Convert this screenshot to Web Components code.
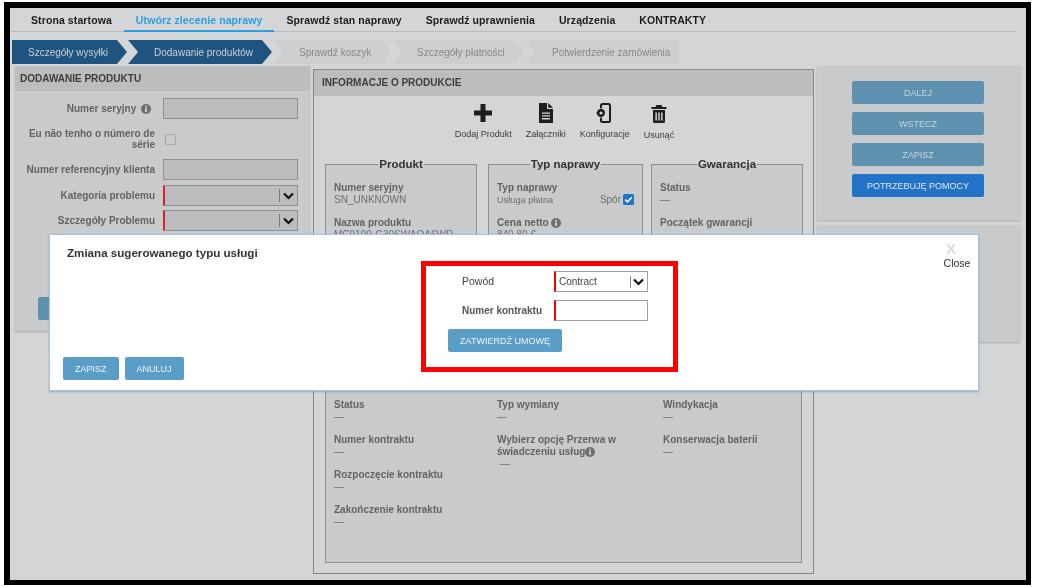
<!DOCTYPE html>
<html lang="pl"><head><meta charset="utf-8"><title>Zlecenie naprawy</title>
<style>
html,body{margin:0;background:#fff;font-family:"Liberation Sans",Arial,sans-serif;}
</style></head><body>
<repair-app></repair-app>
<template id="t-app"><style>
:host{display:block;box-sizing:border-box;width:1027px;height:583px;margin:2px 6px 2px 4px;border:solid #000;border-width:6px 5px 5px 6px;background:#d4d5d7;position:relative;overflow:hidden;font-size:11px;color:#555;filter:blur(.3px)}
.cols{display:grid;grid-template-columns:295px 501px 203px;gap:3px;padding-left:5px;margin-top:2px;align-items:start}
.left{display:block;height:265px}
.mid{margin-top:3px;height:505px}
.rightcol{display:flex;flex-direction:column;gap:5px}
.bl{display:flex;flex-direction:column;gap:8px;width:132px;margin:15px 0 0 35px;padding-bottom:23px}
.r2{height:117px}
.tools{display:flex;justify-content:center;gap:14px;padding:7px 0 0 2px;height:61px;box-sizing:content-box;align-items:flex-start}
.boxes{display:grid;grid-template-columns:152px 155px 152px;column-gap:11px;margin:0 11px;height:120px;overflow:visible}
.boxes>:nth-child(3){margin:0 3px 0 -3px;}
.big{margin:67px 11px 0;height:212px;display:grid;grid-template-columns:163px 166px 1fr;padding:47px 8px 0;box-sizing:border-box;border:1px solid #8d8f91;background:#c9cacc;align-content:start}
.big>div{display:flex;flex-direction:column}
.spor{position:absolute;right:9px;top:29px;display:flex;align-items:center;gap:2px;color:#6c6e70;font-size:10px}
.spor svg{display:block;margin-right:-1px}
.lbtn{display:block;margin:66px 0 0 23px;width:60px;height:23px;background:#5e90b0;border-radius:2px}
</style>
<nav-bar>
  <nav-link>Strona startowa</nav-link><nav-link active>Utwórz zlecenie naprawy</nav-link><nav-link>Sprawdź stan naprawy</nav-link><nav-link>Sprawdź uprawnienia</nav-link><nav-link>Urządzenia</nav-link><nav-link>KONTRAKTY</nav-link>
</nav-bar>
<step-bar>
  <step-item done first style="width:115px;padding-left:16px">Szczegóły wysyłki</step-item>
  <step-item done style="width:144px;padding-left:26px">Dodawanie produktów</step-item>
  <step-item style="width:118px;padding-left:26px">Sprawdź koszyk</step-item>
  <step-item style="width:132px;padding-left:25px">Szczegóły płatności</step-item>
  <step-item last style="width:154px;padding-left:27px">Potwierdzenie zamówienia</step-item>
</step-bar>
<div class="cols">
  <info-panel class="left" shadow title-text="DODAWANIE PRODUKTU">
    <form-row label="Numer seryjny" info kind="input" h="21" mt="7"></form-row>
    <form-row label="Eu não tenho o número de série" kind="check" h="22" mt="9"></form-row>
    <form-row label="Numer referencyjny klienta" kind="input" h="21" mt="9"></form-row>
    <form-row label="Kategoria problemu" kind="select" h="21" mt="5"></form-row>
    <form-row label="Szczegóły Problemu" kind="select" h="21" mt="4"></form-row>
    <div class="lbtn"></div>
  </info-panel>
  <info-panel class="mid" framed title-text="INFORMACJE O PRODUKCIE">
    <div class="tools">
      <tool-item label="Dodaj Produkt"><svg width="20" height="20" viewBox="0 0 20 20"><path fill="#1d1e20" d="M7.5 1h5v6.500H19v5h-6.500V19h-5v-6.500H1v-5h6.500z"/></svg></tool-item>
      <tool-item label="Załączniki"><svg width="20" height="20" viewBox="0 0 20 20"><path fill="#1d1e20" d="M3 0h8v6h6v14H3zM12.200 0l4.800 4.800h-4.800zM6 9.500v1.300h8V9.500zM6 12.300v1.300h8v-1.300zM6 15.100v1.300h8v-1.300z" fill-rule="evenodd"/></svg></tool-item>
      <tool-item label="Konfiguracje"><svg width="20" height="20" viewBox="0 0 20 20"><path fill="none" stroke="#1d1e20" stroke-width="2" d="M6 5V2.500Q6 1 7.500 1h6Q15 1 15 2.500v15q0 1.500-1.500 1.500h-6Q6 19 6 17.500V15"/><circle cx="6" cy="10" r="2.800" fill="none" stroke="#1d1e20" stroke-width="2.400"/><path stroke="#1d1e20" stroke-width="1.600" d="M6 5.500v1.500M6 13v1.500M1.500 10h1.500"/></svg></tool-item>
      <tool-item label="Usunąć" low><svg width="20" height="20" viewBox="0 0 20 20"><path fill="#1d1e20" fill-rule="evenodd" d="M7.500 2h5l1 2h4v2h-15V4h4zM4 7h12v11.500q0 1.500-1.500 1.500h-9Q4 20 4 18.500zM6.400 9.500v8h1.500v-8zM9.250 9.500v8h1.500v-8zM12.100 9.500v8h1.500v-8z"/></svg></tool-item>
    </div>
    <div class="boxes">
      <legend-box legend="Produkt">
        <data-field label="Numer seryjny" value="SN_UNKNOWN"></data-field>
        <data-field label="Nazwa produktu" value="MC9190-G30SWAQA6WR"></data-field>
      </legend-box>
      <legend-box legend="Typ naprawy">
        <data-field label="Typ naprawy" value="Usługa płatna" small></data-field>
        <data-field label="Cena netto" info value="840,80 €"></data-field>
        <div class="spor">Spór <svg width="11" height="11" viewBox="0 0 11 11"><rect width="11" height="11" rx="1.500" fill="#1f74d0"/><path d="M2.200 5.600l2.300 2.300 4.300-4.600" fill="none" stroke="#fff" stroke-width="1.600"/></svg></div>
      </legend-box>
      <legend-box legend="Gwarancja">
        <data-field label="Status" value="—"></data-field>
        <data-field label="Początek gwarancji" value=""></data-field>
      </legend-box>
    </div>
    <div class="big">
      <div><data-field label="Status" value="—"></data-field><data-field label="Numer kontraktu" value="—"></data-field><data-field label="Rozpoczęcie kontraktu" value="—"></data-field><data-field label="Zakończenie kontraktu" value="—"></data-field></div>
      <div><data-field label="Typ wymiany" value="—"></data-field><data-field label="Wybierz opcję Przerwa w świadczeniu usług" tail-info value="—" indent></data-field></div>
      <div><data-field label="Windykacja" value="—"></data-field><data-field label="Konserwacja baterii" value="—"></data-field></div>
    </div>
  </info-panel>
  <div class="rightcol">
    <info-panel shadow>
      <div class="bl"><action-button>DALEJ</action-button><action-button>WSTECZ</action-button><action-button>ZAPISZ</action-button><action-button variant="help">POTRZEBUJĘ POMOCY</action-button></div>
    </info-panel>
    <info-panel class="r2" shadow></info-panel>
  </div>
</div>
<service-modal></service-modal>
</template>

<script>
const css = s => `<style>${s}</style>`;
const infoIcon = (sz=11) => `<svg width="${sz}" height="${sz}" viewBox="0 0 12 12" style="vertical-align:-2px"><circle cx="6" cy="6" r="6" fill="#6c6e70"/><rect x="5" y="5" width="2" height="4.500" fill="#ddd"/><rect x="5" y="2.300" width="2" height="1.800" fill="#ddd"/></svg>`;
const chevron = `<svg width="11" height="8" viewBox="0 0 11 8"><path d="M1 1.500l4.500 4.500 4.500-4.500" fill="none" stroke="#111" stroke-width="2.200"/></svg>`;
class Base extends HTMLElement{
  constructor(){super();this.attachShadow({mode:'open'});}
  connectedCallback(){this.shadowRoot.innerHTML=this.render();}
  attr(n,d=''){return this.hasAttribute(n)?this.getAttribute(n):d;}
}
class RepairApp extends HTMLElement{constructor(){super();this.attachShadow({mode:'open'}).appendChild(document.getElementById('t-app').content.cloneNode(true));}}
class NavBar extends Base{render(){return css(`:host{display:flex;height:23px;margin:0 9px 0 0;padding-left:9px;border-bottom:1px solid #b9babc}`)+`<slot></slot>`;}}
class NavLink extends Base{render(){const a=this.hasAttribute('active');return css(`:host{display:block;box-sizing:border-box;padding:0 12px;height:24px;font:bold 10.500px/24px "Liberation Sans",Arial,sans-serif;letter-spacing:.1px;color:${a?'#2a9ee0':'#1c1c1e'};${a?'border-bottom:2px solid #2a9ee0;':''}}`)+`<slot></slot>`;}}
class StepBar extends Base{render(){return css(`:host{display:flex;margin:8px 0 0 2px;height:24px}`)+`<slot></slot>`;}}
class StepItem extends Base{render(){const d=this.hasAttribute('done'),f=this.hasAttribute('first'),l=this.hasAttribute('last');
 const clip=f?'polygon(0 0,calc(100% - 10px) 0,100% 50%,calc(100% - 10px) 100%,0 100%)':l?'polygon(0 0,100% 0,100% 100%,0 100%,10px 50%)':'polygon(0 0,calc(100% - 10px) 0,100% 50%,calc(100% - 10px) 100%,0 100%,10px 50%)';
 return css(`:host{display:block;box-sizing:border-box;flex:none;height:24px;margin-right:1px;font:10px/25px "Liberation Sans",Arial,sans-serif;white-space:nowrap;background:${d?'#1f5480':'#cdced0'};color:${d?'#c9d0d6':'#86888a'};clip-path:${clip}}`)+`<slot></slot>`;}}
class InfoPanel extends Base{render(){const t=this.attr('title-text'),fr=this.hasAttribute('framed');
 return css(`:host{display:block;box-sizing:border-box;position:relative;background:${fr?'#d4d5d7':'#c9cacc'};${fr?'border:1px solid #85878a;':'box-shadow:0 1px 2px #a9aaac;'}}
 h2{margin:0;background:#bcbdbf;font:bold 10px/${fr?26:25}px "Liberation Sans",Arial,sans-serif;height:${fr?26:25}px;padding-left:${fr?8:5}px;color:#3c3d3f}`)+(t?`<h2>${t}</h2>`:'')+`<slot></slot>`;}}
class FormRow extends Base{render(){const h=this.attr('h','21'),k=this.attr('kind');
 const inner=k==='check'?`<span class="cb"></span>`:k==='select'?`<span class="f sel"><i></i>${chevron}</span>`:`<span class="f"></span>`;
 return css(`:host{display:grid;grid-template-columns:140px 135px;column-gap:8px;align-items:center;min-height:${h}px;margin-top:${this.attr('mt','5')}px;font:bold 10px/11px "Liberation Sans",Arial,sans-serif;color:#606264}
 .l{text-align:right;padding-left:2px}
 .f{box-sizing:border-box;display:flex;align-items:center;justify-content:flex-end;height:${h}px;background:#bcbdbf;border:1px solid #8e9092}
 .sel{border-left:2px solid #d8222a;padding-right:3px;gap:2px}
 .sel i{width:1px;height:13px;background:#77797b;margin-right:1px}
 .cb{width:9px;height:9px;border:1px solid #a6a7a9;border-radius:2px;background:#c9cacc;margin-left:2px}`)+
 `<div class="l">${this.attr('label')}${this.hasAttribute('info')?' <span style="display:inline-block;width:12px;padding-right:4px;text-align:right">'+infoIcon(10)+'</span>':''}</div>${inner}`;}}
class ToolItem extends Base{render(){return css(`:host{display:flex;flex-direction:column;align-items:center;font:9px/12px "Liberation Sans",Arial,sans-serif;color:#3a3b40;white-space:nowrap}
 .t{margin-top:${this.hasAttribute('low')?6:5}px}`)+`<slot></slot><div class="t">${this.attr('label')}</div>`;}}
class LegendBox extends Base{render(){return css(`:host{display:block;position:relative;box-sizing:border-box;border:1px solid #8d8f91;background:#c9cacc;height:120px;padding:17px 8px 0}
 .lg{position:absolute;top:-8px;left:0;right:0;text-align:center;font:bold 11.500px/14px "Liberation Sans",Arial,sans-serif;color:#333}
 .lg span{background:linear-gradient(#d4d5d7 50%,#c9cacc 50%);padding:0 1px}`)+`<div class="lg"><span>${this.attr('legend')}</span></div><slot></slot>`;}}
class DataField extends Base{render(){const v=this.attr('value');
 return css(`:host{display:block;min-height:35px;font:10px/12px "Liberation Sans",Arial,sans-serif;color:#6c6e70}
 .l{font-weight:bold;color:#616365}.ind{margin-left:3px}.sm{font-size:9.200px}`)+
 `<div class="l">${this.attr('label')}${this.hasAttribute('info')?' '+infoIcon(10):''}${this.hasAttribute('tail-info')?infoIcon(10):''}</div>`+(v?`<div class="${this.hasAttribute('indent')?'ind':''} ${this.hasAttribute('small')?'sm':''}">${v}</div>`:'');}}
class ActionButton extends Base{render(){const h=this.attr('variant')==='help',p=this.attr('variant')==='modal';
 return css(`:host{display:flex;align-items:center;justify-content:center;box-sizing:border-box;height:23px;border-radius:2px;white-space:nowrap;font:9px/12px "Liberation Sans",Arial,sans-serif;background:${h?'#2272c8':p?'#5a9dc6':'#5e90b0'};color:${h?'#dfe8f2':p?'#eef4f8':'#c6d4de'}}`)+`<slot></slot>`;}}
class ServiceModal extends Base{render(){return css(`
 :host{position:absolute;left:39px;top:226px;width:930px;height:157px;box-sizing:border-box;background:#fff;border:1px solid #a9c4da;box-shadow:0 1px 2px #8fa9bf;font:10.500px/13px "Liberation Sans",Arial,sans-serif;color:#444;display:grid;grid-template-columns:358px 257px 1fr;padding:0 0 0 13px}
 .a{display:flex;flex-direction:column;justify-content:space-between;padding-bottom:10px}
 h3{margin:11px 0 0 4px;font:bold 11.600px/14px "Liberation Sans",Arial,sans-serif;color:#333}
 .btns{display:flex;gap:6px}
 .btns action-button{padding:0 12px}
 .btns action-button+action-button{padding:0 12px}
 .red{box-sizing:border-box;height:111px;margin-top:26px;border:5px solid #f00;padding:5px 0 0 22px;display:flex;flex-direction:column;align-items:flex-start}
 .row{display:grid;grid-template-columns:92px 94px;align-items:center;margin-left:14px;height:21px;margin-bottom:8px;white-space:nowrap}
 .ctl{box-sizing:border-box;height:21px;border:1px solid #a0a1a5;border-left:2px solid #f00;display:flex;align-items:center;padding:0 3px 0 3px;color:#444;font-size:10px}
 .ctl i{margin-left:auto;width:1px;height:12px;background:#888;margin-right:2px}
 .close{text-align:center;padding-top:5px;justify-self:end;width:34px;margin-right:4px;color:#333;font-size:10.500px;line-height:12px}
 .x{font:bold 15px/17px "Liberation Sans",Arial,sans-serif;color:#dcdcdc;display:block;margin-left:-12px}
 b{color:#555;font-size:10px}
 .sub{width:114px}`)+
 `<div class="a"><h3>Zmiana sugerowanego typu usługi</h3><div class="btns"><action-button variant="modal">ZAPISZ</action-button><action-button variant="modal">ANULUJ</action-button></div></div>
 <div class="red"><div class="row"><span>Powód</span><span class="ctl">Contract<i></i>${chevron}</span></div>
 <div class="row"><b>Numer kontraktu</b><span class="ctl"></span></div>
 <action-button variant="modal" class="sub">ZATWIERDŹ UMOWĘ</action-button></div>
 <div class="close"><span class="x">X</span>Close</div>`;}}
customElements.define('nav-bar',NavBar);customElements.define('nav-link',NavLink);customElements.define('step-bar',StepBar);customElements.define('step-item',StepItem);customElements.define('info-panel',InfoPanel);customElements.define('form-row',FormRow);customElements.define('tool-item',ToolItem);customElements.define('legend-box',LegendBox);customElements.define('data-field',DataField);customElements.define('action-button',ActionButton);customElements.define('service-modal',ServiceModal);customElements.define('repair-app',RepairApp);
</script>
</body></html>
